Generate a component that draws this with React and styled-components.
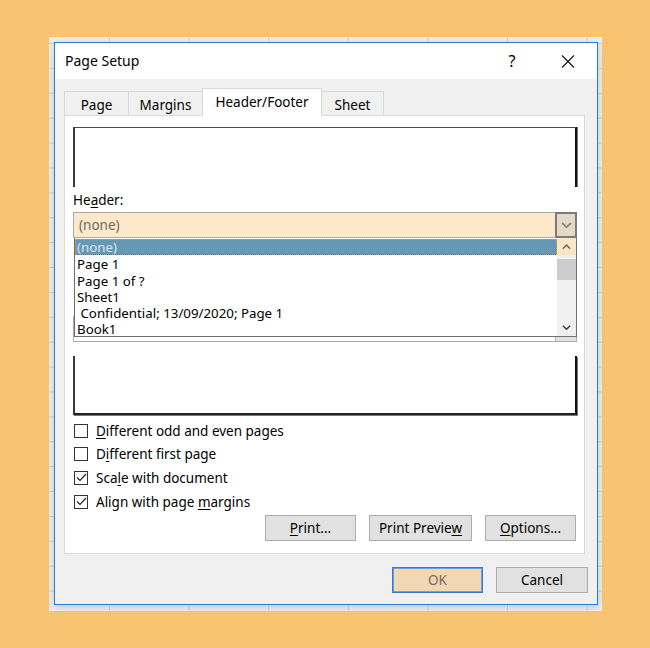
import React from "react";
import styled, { createGlobalStyle } from "styled-components";

const GlobalStyle = createGlobalStyle`
  * { box-sizing: border-box; }
  body {
    margin: 0;
    background: #F8C472;
    font-family: "Noto Sans", "Liberation Sans", sans-serif;
    font-size: 13.5px;
    color: #000;
  }
`;

const Page = styled.div`
  width: 650px;
  height: 648px;
  padding: 37px 0 0 49px;
`;

const Sheet = styled.div`
  width: 553px;
  height: 574px;
  padding: 5px 0 0 5px;
  background-color: #EBEBEB;
  background-image:
    linear-gradient(to right, #CDCDCD 1px, transparent 1px),
    linear-gradient(to bottom, #CDCDCD 1px, transparent 1px);
  background-size: 79.6px 24.9px;
  background-position: 60px 6px;
`;

const Dialog = styled.div`
  width: 544px;
  border: 1px solid #2B7BD6;
  background: #F0F0F0;
  display: flex;
  flex-direction: column;
  box-shadow: 0 2px 6px rgba(0, 0, 0, 0.15);
`;

const TitleBar = styled.div`
  height: 36px;
  background: #fff;
  display: flex;
  align-items: center;
  padding-left: 10px;
`;

const Title = styled.div`
  flex: 1;
  font-size: 14px;
  padding-bottom: 1px;
`;

const TitleButton = styled.div`
  width: 44px;
  height: 36px;
  display: flex;
  align-items: center;
  justify-content: center;
  font-size: 16px;
  margin-right: ${(p) => p.$mr || 0}px;
`;

const TabRow = styled.div`
  display: flex;
  align-items: flex-end;
  height: 36px;
  padding: 9px 0 0 9px;
`;

const Tab = styled.div`
  position: relative;
  height: ${(p) => (p.$active ? 28 : 24)}px;
  width: ${(p) => p.$w}px;
  margin-left: -1px;
  margin-bottom: ${(p) => (p.$active ? -1 : 0)}px;
  z-index: ${(p) => (p.$active ? 2 : 1)};
  background: ${(p) => (p.$active ? "#fff" : "#F0F0F0")};
  border: 1px solid #D9D9D9;
  border-bottom: none;
  display: flex;
  align-items: ${(p) => (p.$active ? "flex-start" : "center")};
  padding-top: ${(p) => (p.$active ? 4 : 2)}px;
  justify-content: center;
  font-size: 13.5px;
  &:first-child { margin-left: 0; }
`;

const Panel = styled.div`
  margin: 0 12px 0 9px;
  height: 439px;
  background: #fff;
  border: 1px solid #D9D9D9;
  padding: 11px 7px 0 8px;
  display: flex;
  flex-direction: column;
`;

const PreviewTop = styled.div`
  height: 60px;
  border-top: 1px solid #4A4A4A;
  border-left: 2px solid #3A3A3A;
  border-right: 2px solid #111;
  box-shadow: 1px 0 0 #777;
`;

const PreviewBottom = styled.div`
  height: 59px;
  margin-top: 14px;
  border-bottom: 2px solid #222;
  border-left: 2px solid #3A3A3A;
  border-right: 2px solid #111;
  box-shadow: 1px 1px 0 #777;
`;

const Label = styled.div`
  line-height: 18px;
  margin-top: ${(p) => p.$mt}px;
`;

const ComboWrap = styled.div`
  position: relative;
  margin-top: ${(p) => p.$mt}px;
`;

const Combo = styled.div`
  height: 26px;
  border: 1px solid #ABABAB;
  background: ${(p) => (p.$focus ? "#FDE8C9" : "#fff")};
  display: flex;
  align-items: center;
  padding-left: 5px;
  color: #6A6A6A;
`;

const ComboText = styled.span`
  flex: 1;
`;

const ComboButton = styled.div`
  width: 22px;
  height: 26px;
  margin: -1px -1px -1px auto;
  border: ${(p) => (p.$focus ? "2px solid #7B7B7B" : "1px solid #ADADAD")};
  background: ${(p) => (p.$focus ? "#E4DAC8" : "#E1E1E1")};
  display: flex;
  align-items: center;
  justify-content: center;
`;

const ListBox = styled.div`
  position: absolute;
  top: 100%;
  left: 1px;
  right: 0;
  height: 99px;
  z-index: 5;
  background: #fff;
  border: 1px solid #6E6E6E;
  border-top: none;
  display: flex;
`;

const Items = styled.div`
  flex: 1;
  display: flex;
  flex-direction: column;
  padding-top: 1px;
`;

const Item = styled.div`
  height: 16.3px;
  line-height: 16px;
  padding-left: 2px;
  padding-top: ${(p) => (p.$selected ? 0 : 1)}px;
  white-space: pre;
  font-size: 13.3px;
  background: ${(p) => (p.$selected ? "#6598B4" : "transparent")};
  color: ${(p) => (p.$selected ? "#DCE4EC" : "#000")};
  outline: ${(p) => (p.$selected ? "1px dotted #D99B4E" : "none")};
  outline-offset: -1px;
  border-bottom: ${(p) => (p.$selected ? "1px solid #1B74D4" : "none")};
`;

const Scrollbar = styled.div`
  width: 19px;
  background: #F0F0F0;
  display: flex;
  flex-direction: column;
`;

const ScrollArrow = styled.div`
  height: 17px;
  display: flex;
  align-items: center;
  justify-content: center;
  background: ${(p) => p.$bg || "transparent"};
`;

const Thumb = styled.div`
  height: 21px;
  margin-top: 4px;
  background: #CDCDCD;
`;

const Spacer = styled.div`
  flex: 1;
`;

const CheckList = styled.div`
  margin-top: 4px;
  display: flex;
  flex-direction: column;
`;

const CheckRow = styled.div`
  height: 23.6px;
  display: flex;
  align-items: center;
  gap: 8px;
  padding-left: 1px;
`;

const Box = styled.div`
  width: 14px;
  height: 14px;
  border: 1px solid #333;
  background: #fff;
  display: flex;
  align-items: center;
  justify-content: center;
`;

const ButtonRow = styled.div`
  display: flex;
  justify-content: flex-end;
  gap: 13px;
  margin-top: 2px;
  padding-right: 1px;
`;

const Button = styled.div`
  width: ${(p) => p.$w}px;
  height: 26px;
  background: ${(p) => (p.$primary ? "#F1D8B3" : "#E1E1E1")};
  border: 1px solid ${(p) => (p.$primary ? "#2F7BD0" : "#ADADAD")};
  box-shadow: ${(p) => (p.$primary ? "inset 0 0 0 1px #6FA2DC" : "none")};
  color: ${(p) => (p.$primary ? "#7A6A58" : "#000")};
  display: flex;
  align-items: center;
  justify-content: center;
  padding-bottom: 1px;
`;

const DialogFooter = styled.div`
  display: flex;
  justify-content: flex-end;
  gap: 13px;
  padding: 13px 9px 11px 0;
`;

const U = styled.span`
  text-decoration: underline;
  text-underline-offset: 2px;
`;

function Chevron({ up, color = "#505050", size = 10 }) {
  return (
    <svg width={size} height={size * 0.6} viewBox="0 0 10 6">
      <path
        d={up ? "M1 5.2 L5 1.2 L9 5.2" : "M1 0.8 L5 4.8 L9 0.8"}
        fill="none"
        stroke={color}
        strokeWidth="1.6"
      />
    </svg>
  );
}

function Check({ checked, children }) {
  return (
    <CheckRow>
      <Box>
        {checked && (
          <svg width="11" height="9" viewBox="0 0 11 9">
            <path d="M1 4.5 L4 7.5 L10 1" fill="none" stroke="#222" strokeWidth="1.2" />
          </svg>
        )}
      </Box>
      <span>{children}</span>
    </CheckRow>
  );
}

const options = [
  "(none)",
  "Page 1",
  "Page 1 of ?",
  "Sheet1",
  " Confidential; 13/09/2020; Page 1",
  "Book1",
];

export default function App() {
  return (
    <Page>
      <GlobalStyle />
      <Sheet>
        <Dialog>
          <TitleBar>
            <Title>Page Setup</Title>
            <TitleButton $mr={12}>?</TitleButton>
            <TitleButton $mr={7}>
              <svg width="14" height="13" viewBox="0 0 14 13">
                <path d="M1 0.5 L13 12.5 M13 0.5 L1 12.5" stroke="#111" strokeWidth="1.1" />
              </svg>
            </TitleButton>
          </TitleBar>

          <TabRow>
            <Tab $w={65}>Page</Tab>
            <Tab $w={75}>Margins</Tab>
            <Tab $w={120} $active>Header/Footer</Tab>
            <Tab $w={63}>Sheet</Tab>
          </TabRow>

          <Panel>
            <PreviewTop />
            <Label $mt={4}>
              He<U>a</U>der:
            </Label>
            <ComboWrap $mt={3}>
              <Combo $focus>
                <ComboText>(none)</ComboText>
                <ComboButton $focus>
                  <Chevron color="#8C8272" size={11} />
                </ComboButton>
              </Combo>
              <ListBox>
                <Items>
                  {options.map((o, i) => (
                    <Item key={o} $selected={i === 0}>
                      {o}
                    </Item>
                  ))}
                </Items>
                <Scrollbar>
                  <ScrollArrow $bg="#FCE6C6">
                    <Chevron up color="#606060" size={9} />
                  </ScrollArrow>
                  <Thumb />
                  <Spacer />
                  <ScrollArrow>
                    <Chevron color="#404040" size={9} />
                  </ScrollArrow>
                </Scrollbar>
              </ListBox>
            </ComboWrap>

            {/* footer combo, mostly hidden under the open list */}
            <ComboWrap $mt={78}>
              <Combo>
                <ComboButton />
              </Combo>
            </ComboWrap>
            <PreviewBottom />

            <CheckList>
              <Check>
                <U>D</U>ifferent odd and even pages
              </Check>
              <Check>
                D<U>i</U>fferent first page
              </Check>
              <Check checked>
                Sca<U>l</U>e with document
              </Check>
              <Check checked>
                Align with page <U>m</U>argins
              </Check>
            </CheckList>

            <ButtonRow>
              <Button $w={91}>
                <span><U>P</U>rint...</span>
              </Button>
              <Button $w={103}>
                <span>Print Previe<U>w</U></span>
              </Button>
              <Button $w={91}>
                <span><U>O</U>ptions...</span>
              </Button>
            </ButtonRow>
          </Panel>

          <DialogFooter>
            <Button $w={91} $primary>OK</Button>
            <Button $w={92}>Cancel</Button>
          </DialogFooter>
        </Dialog>
      </Sheet>
    </Page>
  );
}
